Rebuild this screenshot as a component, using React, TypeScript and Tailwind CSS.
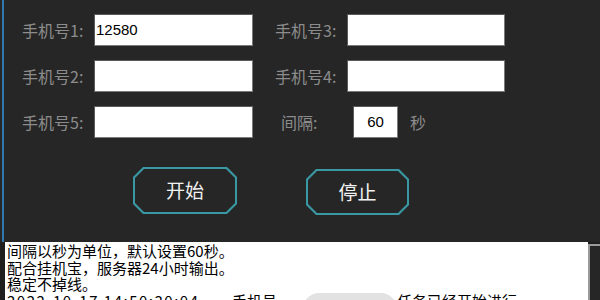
import React from "react";

const cjk = { fontFamily: '"SimSun","Noto Sans CJK SC",sans-serif' };

function Field({ label, value, labelW, inputW }: { label: string; value?: string; labelW: string; inputW: string }) {
  return (
    <div className="flex items-center h-[32px]">
      <div className={`${labelW} text-[16px] text-[#8c8c8c] leading-none`} style={cjk}>{label}</div>
      <div className={`${inputW} h-[32px] bg-white border border-[#7a7a7a] border-t-[#5a5a5a] border-l-[#5a5a5a] flex items-center px-[1px] text-[15px] text-black`} style={{ fontFamily: '"Liberation Sans",Arial,sans-serif' }}>
        {value}
      </div>
    </div>
  );
}

function OctButton({ label, w, h }: { label: string; w: string; h: string }) {
  return (
    <div className={`${w} ${h} bg-[#3a98a4] p-[2px] [clip-path:polygon(10px_0,calc(100%-10px)_0,100%_10px,100%_calc(100%-10px),calc(100%-10px)_100%,10px_100%,0_calc(100%-10px),0_10px)]`}>
      <div className="w-full h-full bg-[#262626] flex items-center justify-center text-[19px] text-[#f2f2f2] [clip-path:polygon(9px_0,calc(100%-9px)_0,100%_9px,100%_calc(100%-9px),calc(100%-9px)_100%,9px_100%,0_calc(100%-9px),0_9px)]" style={{ fontFamily: '"Noto Sans CJK SC",sans-serif' }}>
        {label}
      </div>
    </div>
  );
}

export default function App() {
  return (
    <div className="w-[600px] h-[300px] bg-[#262626] overflow-hidden flex flex-col">
      <div className="h-[242px] flex shrink-0">
        <div className="ml-[2px] w-[2px] h-full bg-[#2f78ad]" />
        <div className="flex-1 flex flex-col">
          <div className="flex pt-[14px]">
            <div className="ml-[18px] flex flex-col gap-[14px]">
              <Field label="手机号1:" value="12580" labelW="w-[72px]" inputW="w-[159px]" />
              <Field label="手机号2:" labelW="w-[72px]" inputW="w-[159px]" />
              <Field label="手机号5:" labelW="w-[72px]" inputW="w-[159px]" />
            </div>
            <div className="ml-[22px] flex flex-col gap-[14px]">
              <Field label="手机号3:" labelW="w-[72px]" inputW="w-[158px]" />
              <Field label="手机号4:" labelW="w-[72px]" inputW="w-[158px]" />
              <div className="flex items-center h-[32px]">
                <div className="ml-[6px] w-[72px] text-[16px] text-[#8c8c8c] leading-none" style={cjk}>间隔:</div>
                <div className="w-[45px] h-[32px] bg-white border border-[#7a7a7a] border-t-[#5a5a5a] border-l-[#5a5a5a] flex items-center justify-center text-[15px] text-black" style={{ fontFamily: '"Liberation Sans",Arial,sans-serif' }}>60</div>
                <div className="ml-[12px] text-[16px] text-[#8c8c8c] leading-none" style={cjk}>秒</div>
              </div>
            </div>
          </div>
          <div className="flex items-start mt-[29px]">
            <div className="ml-[129px]">
              <OctButton label="开始" w="w-[104px]" h="h-[47px]" />
            </div>
            <div className="ml-[69px] mt-[2px]">
              <OctButton label="停止" w="w-[103px]" h="h-[46px]" />
            </div>
          </div>
        </div>
      </div>
      <div className="flex-1 flex bg-[#1e1e1e]">
        <div className="ml-[5px] flex-1 bg-white pl-[2px] pt-[1px] text-[15px] leading-[16.5px] text-black overflow-hidden whitespace-nowrap" style={cjk}>
          <div>间隔以秒为单位，默认设置60秒。</div>
          <div>配合挂机宝，服务器24小时输出。</div>
          <div>稳定不掉线。</div>
          <div className="flex items-center">
            <span className="w-[225px] tracking-[1.5px]">2022-10-17 14:50:30:04</span>
            <span>手机号</span>
            <span className="ml-[26px] inline-block w-[94px] h-[16px] rounded-t-[20px] bg-[#e2e2e2]" />
            <span>任务已经开始进行</span>
          </div>
        </div>
        <div className="w-[12px] mt-[2px] bg-[#262626] border-l-2 border-t-2 border-[#9a9a9a]" />
      </div>
    </div>
  );
}
